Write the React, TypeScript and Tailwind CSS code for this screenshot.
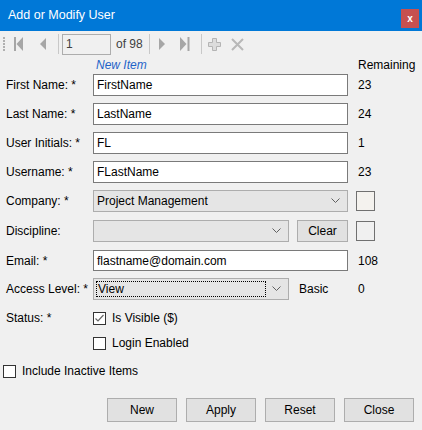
import React from 'react';

const font = { fontFamily: '"Liberation Sans", "Segoe UI", Arial, sans-serif' };

function Chevron() {
  return (
    <svg width="9" height="6" viewBox="0 0 9 6" className="shrink-0">
      <path d="M0.5 0.5 L4.5 4.5 L8.5 0.5" fill="none" stroke="#606060" strokeWidth="1" />
    </svg>
  );
}

function Check({ checked }: { checked?: boolean }) {
  return (
    <span className="w-[13px] h-[13px] bg-white border border-[#333333] flex items-center justify-center shrink-0">
      {checked && (
        <svg width="11" height="11" viewBox="0 0 11 11">
          <path d="M1.5 5.5 L4 8 L9.5 2" fill="none" stroke="#666666" strokeWidth="1.2" />
        </svg>
      )}
    </span>
  );
}

function TextRow({ label, value, remaining }: { label: string; value: string; remaining: string }) {
  return (
    <div className="flex items-center h-[22px]">
      <span className="w-[87px] ml-[6px] text-[12px] text-black">{label}</span>
      <div className="w-[255px] h-[22px] bg-white border border-[#7a7a7a] flex items-center pl-[3px] text-[12px] text-black">
        {value}
      </div>
      <span className="ml-[10px] text-[12px] text-black">{remaining}</span>
    </div>
  );
}

export default function App() {
  return (
    <div className="w-[422px] h-[430px] bg-[#f0f0f0] flex flex-col overflow-hidden" style={font}>
      {/* title bar */}
      <div className="h-[31px] bg-[#0078d7] flex items-center justify-between pl-[8px] pr-[3px]">
        <span className="text-white text-[12.5px]">Add or Modify User</span>
        <span className="w-[18px] h-[19px] bg-[#c75050] text-white text-[10px] font-bold flex items-center justify-center mt-[6px]">
          x
        </span>
      </div>

      {/* toolbar */}
      <div className="h-[26px] flex items-center">
        <svg width="4" height="16" viewBox="0 0 4 16" className="ml-[2px]">
          {[1, 4, 7, 10, 13].map((y) => (
            <rect key={y} x="1" y={y} width="2" height="2" fill="#b0b0b0" />
          ))}
        </svg>
        <svg width="10" height="14" viewBox="0 0 10 14" className="ml-[8px]">
          <rect x="0" y="0" width="2" height="14" fill="#a6a6a6" />
          <path d="M9 0 L2.5 7 L9 14 Z" fill="#a6a6a6" />
        </svg>
        <svg width="6" height="12" viewBox="0 0 6 12" className="ml-[16px]">
          <path d="M6 0 L0 6 L6 12 Z" fill="#a6a6a6" />
        </svg>
        <span className="ml-[12px] w-px h-[20px] bg-[#c8c8c8]" />
        <div className="ml-[3px] w-[49px] h-[21px] border border-[#adadad] bg-[#f0f0f0] text-[12px] text-[#404040] flex items-center pl-[3px]">
          1
        </div>
        <span className="ml-[5px] w-[30px] text-[12px] text-[#404040]">of 98</span>
        <span className="ml-[3px] w-px h-[20px] bg-[#c8c8c8]" />
        <svg width="6" height="12" viewBox="0 0 6 12" className="ml-[9px]">
          <path d="M0 0 L6 6 L0 12 Z" fill="#a6a6a6" />
        </svg>
        <svg width="10" height="14" viewBox="0 0 10 14" className="ml-[15px]">
          <path d="M0 0 L6.5 7 L0 14 Z" fill="#a6a6a6" />
          <rect x="7.5" y="0" width="2" height="14" fill="#a6a6a6" />
        </svg>
        <span className="ml-[11px] w-px h-[20px] bg-[#c8c8c8]" />
        <svg width="13" height="13" viewBox="0 0 13 13" className="ml-[6px]">
          <path d="M4.5 0.5 H8.5 V4.5 H12.5 V8.5 H8.5 V12.5 H4.5 V8.5 H0.5 V4.5 H4.5 Z" fill="#dcdcdc" stroke="#b4b4b4" strokeWidth="1" />
        </svg>
        <svg width="13" height="13" viewBox="0 0 13 13" className="ml-[10px]">
          <path d="M1 1 L12 12 M12 1 L1 12" stroke="#b8b8b8" strokeWidth="2" />
        </svg>
      </div>

      {/* header */}
      <div className="h-[15px] flex items-center">
        <span className="ml-[96px] w-[262px] text-[12px] italic text-[#1e64c8]">New Item</span>
        <span className="text-[12px] text-black">Remaining</span>
      </div>

      <div className="flex flex-col gap-[7px] mt-[2px]">
        <TextRow label="First Name: *" value="FirstName" remaining="23" />
        <TextRow label="Last Name: *" value="LastName" remaining="24" />
        <TextRow label="User Initials: *" value="FL" remaining="1" />
        <TextRow label="Username: *" value="FLastName" remaining="23" />
      </div>

      <div className="flex flex-col mt-[7px]">
        {/* company */}
        <div className="flex items-center h-[22px]">
          <span className="w-[87px] ml-[6px] text-[12px] text-black">Company: *</span>
          <div className="w-[255px] h-[22px] bg-[#e5e5e5] border border-[#adadad] flex items-center justify-between pl-[3px] pr-[7px] text-[12px] text-black">
            <span>Project Management</span>
            <Chevron />
          </div>
          <span className="ml-[8px] w-[19px] h-[20px] border border-[#707070] bg-[#f4f2ee]" />
        </div>

        {/* discipline */}
        <div className="flex items-center h-[22px] mt-[8px]">
          <span className="w-[87px] ml-[6px] text-[12px] text-black">Discipline:</span>
          <div className="w-[196px] h-[22px] bg-[#e5e5e5] border border-[#adadad] flex items-center justify-end pr-[7px]">
            <Chevron />
          </div>
          <button className="ml-[8px] w-[51px] h-[22px] bg-[#e1e1e1] border border-[#adadad] text-[12px] text-black">
            Clear
          </button>
          <span className="ml-[8px] w-[19px] h-[20px] border border-[#707070] bg-[#f0f0f0]" />
        </div>

        {/* email */}
        <div className="flex items-center h-[21px] mt-[8px]">
          <span className="w-[87px] ml-[6px] text-[12px] text-black">Email: *</span>
          <div className="w-[255px] h-[21px] bg-white border border-[#7a7a7a] flex items-center pl-[3px] text-[12px] text-black">
            flastname@domain.com
          </div>
          <span className="ml-[10px] text-[12px] text-black">108</span>
        </div>

        {/* access level */}
        <div className="flex items-center h-[22px] mt-[7px]">
          <span className="w-[87px] ml-[6px] text-[12px] text-black">Access Level: *</span>
          <div className="w-[196px] h-[22px] bg-[#e5e5e5] border border-[#adadad] flex items-center pl-[2px] pr-[7px] gap-[6px]">
            <span className="flex-1 h-[16px] border border-dotted border-black flex items-center text-[12px] text-black pl-[1px]">
              View
            </span>
            <Chevron />
          </div>
          <span className="ml-[10px] w-[59px] text-[12px] text-black">Basic</span>
          <span className="text-[12px] text-black">0</span>
        </div>
      </div>

      {/* status */}
      <div className="flex items-center h-[14px] mt-[11px]">
        <span className="w-[87px] ml-[6px] text-[12px] text-black">Status: *</span>
        <Check checked />
        <span className="ml-[6px] text-[12px] text-black">Is Visible ($)</span>
      </div>
      <div className="flex items-center h-[14px] mt-[11px]">
        <span className="ml-[93px]" />
        <Check />
        <span className="ml-[6px] text-[12px] text-black">Login Enabled</span>
      </div>
      <div className="flex items-center h-[14px] mt-[14px] pl-[3px]">
        <Check />
        <span className="ml-[6px] text-[12px] text-black">Include Inactive Items</span>
      </div>

      {/* buttons */}
      <div className="flex justify-end gap-[9px] pr-[8px] mt-[20px]">
        {['New', 'Apply', 'Reset', 'Close'].map((b) => (
          <button
            key={b}
            className="w-[70px] h-[24px] bg-[#e1e1e1] border border-[#adadad] text-[12px] text-black"
          >
            {b}
          </button>
        ))}
      </div>
    </div>
  );
}
